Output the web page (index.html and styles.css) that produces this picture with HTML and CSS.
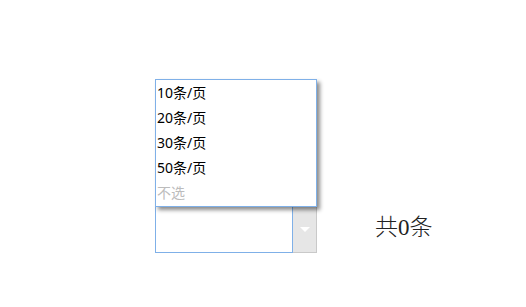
FILE: index.html
```html
<!DOCTYPE html>
<html lang="zh-CN">
<head>
<meta charset="utf-8">
<title>分页</title>
<link rel="stylesheet" href="styles.css">
</head>
<body>
<div class="page">
  <div class="pager">
    <div class="select">
      <div class="select-input"></div>
      <div class="select-btn"><span class="arrow"></span></div>
      <ul class="dropdown">
        <li class="opt">10条/页</li>
        <li class="opt">20条/页</li>
        <li class="opt">30条/页</li>
        <li class="opt">50条/页</li>
        <li class="opt opt-none">不选</li>
      </ul>
    </div>
    <div class="total">共0条</div>
  </div>
</div>
</body>
</html>
```

FILE: styles.css
```css
html, body {
  margin: 0;
  padding: 0;
  background: #fff;
}
.page {
  width: 526px;
  height: 307px;
  box-sizing: border-box;
  padding: 206px 0 0 155px;
}
.pager {
  display: flex;
  align-items: center;
}
.select {
  position: relative;
  display: flex;
  width: 162px;
  height: 47px;
}
.select-input {
  width: 138px;
  height: 47px;
  box-sizing: border-box;
  border: 1px solid #7fb0e8;
  background: #fff;
}
.select-btn {
  width: 24px;
  height: 47px;
  box-sizing: border-box;
  border-right: 1px solid #c9c9c9;
  border-bottom: 1px solid #c9c9c9;
  border-top: 1px solid #c9c9c9;
  background: #e6e6e6;
  display: flex;
  align-items: center;
  justify-content: center;
}
.arrow {
  width: 0;
  height: 0;
  border-left: 5px solid transparent;
  border-right: 5px solid transparent;
  border-top: 5px solid #fff;
}
.dropdown {
  position: absolute;
  left: 0;
  bottom: 46px;
  width: 162px;
  box-sizing: border-box;
  margin: 0;
  padding: 0 0 1px 0;
  list-style: none;
  background: #fff;
  border: 1px solid #7fb0e8;
  box-shadow: 3px 3px 4px rgba(0, 0, 0, 0.45);
}
.opt {
  height: 25px;
  line-height: 25px;
  padding-left: 1px;
  font-family: "Noto Sans", "Noto Sans CJK SC", sans-serif;
  font-size: 14px;
  color: #000;
  white-space: nowrap;
}
.opt-none {
  color: #bcbcbc;
}
.total {
  margin-left: 58px;
  margin-top: -10px;
  font-family: "Liberation Serif", "Noto Sans CJK SC", serif;
  font-size: 23px;
  font-weight: 300;
  color: #222;
}
```
